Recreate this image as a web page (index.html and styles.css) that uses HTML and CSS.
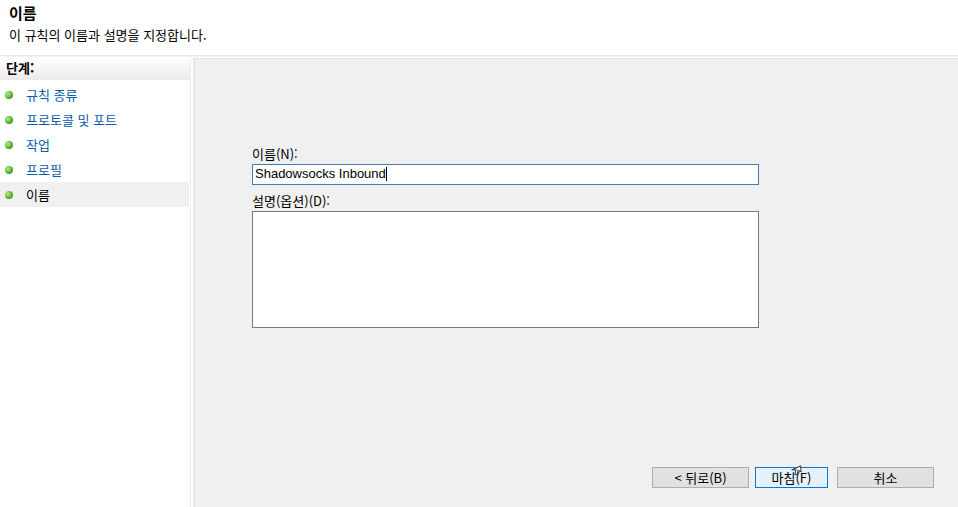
FILE: index.html
```html
<!DOCTYPE html>
<html lang="ko">
<head>
<meta charset="utf-8">
<link rel="stylesheet" href="styles.css">
</head>
<body>
<div class="page">
  <header class="head">
    <div class="title">이름</div>
    <div class="subtitle">이 규칙의 이름과 설명을 지정합니다.</div>
  </header>
  <div class="body">
    <aside class="steps">
      <div class="steps-head">단계:</div>
      <ul class="step-list">
        <li class="step"><span class="dot"></span><span class="link">규칙 종류</span></li>
        <li class="step"><span class="dot"></span><span class="link">프로토콜 및 포트</span></li>
        <li class="step"><span class="dot"></span><span class="link">작업</span></li>
        <li class="step"><span class="dot"></span><span class="link">프로필</span></li>
        <li class="step current"><span class="dot"></span><span class="cur">이름</span></li>
      </ul>
    </aside>
    <div class="sep"></div>
    <main class="content">
      <div class="form">
        <label class="lbl">이름(N):</label>
        <div class="input">Shadowsocks Inbound<span class="caret"></span></div>
        <label class="lbl lbl2">설명(옵션)(D):</label>
        <div class="textarea"></div>
      </div>
      <div class="buttons">
        <button class="btn">&lt; 뒤로(B)</button>
        <button class="btn primary">마침(F)
          <svg class="cursor" width="14" height="16" viewBox="0 0 14 16"><path d="M8 1 L12 5 L9 6 L11 10 L9 11 L7 7 L4 9 Z" fill="#fff" stroke="#333" stroke-width="1" transform="rotate(40 7 7)"/></svg>
        </button>
        <button class="btn">취소</button>
      </div>
    </main>
  </div>
</div>
</body>
</html>
```
FILE: styles.css
```css
* { box-sizing: border-box; }
html, body { margin: 0; padding: 0; }
body {
  width: 958px;
  height: 507px;
  overflow: hidden;
  background: #ffffff;
  font-family: "Noto Sans CJK KR", "DejaVu Sans", sans-serif;
  font-size: 13px;
  color: #000;
}
.page { display: flex; flex-direction: column; height: 507px; }
.head {
  height: 56px;
  padding: 3px 0 0 9px;
  border-bottom: 1px solid #e6e6e6;
  flex: none;
}
.title { font-size: 15px; font-weight: bold; line-height: 20px; }
.subtitle { font-size: 13px; line-height: 18px; margin-top: 3px; }
.body {
  flex: 1;
  display: flex;
  padding-top: 1px;
  border-top: 1px solid #f4f4f4;
}
.steps {
  width: 191px;
  flex: none;
  background: #fff;
  border-right: 1px solid #ececec;
}
.steps-head {
  height: 22px;
  padding: 1px 0 0 6px;
  font-weight: bold;
  font-size: 13px;
  line-height: 18px;
  background: linear-gradient(#ffffff, #ebebeb);
}
.step-list { list-style: none; margin: 2px 0 0; padding: 0; }
.step {
  height: 25px;
  display: flex;
  align-items: center;
  padding-left: 5px;
  margin-right: 1px;
}
.step.current { background: #f0f0f0; }
.dot {
  width: 8px;
  height: 8px;
  border-radius: 50%;
  background: radial-gradient(circle at 35% 35%, #b6ec8e, #4faa24 60%, #2f7d12);
  margin-right: 13px;
}
.link { color: #0b5cad; }
.cur { color: #000; }
.sep {
  width: 3px;
  flex: none;
  background: #fff;
  border-right: 1px solid #e8e8e8;
}
.content {
  flex: 1;
  background: #f0f0f0;
  border-top: 1px solid #e4e4e4;
  border-left: 1px solid #e4e4e4;
  display: flex;
  flex-direction: column;
  padding: 87px 0 0 57px;
}
.form { width: 507px; display: flex; flex-direction: column; }
.lbl { line-height: 16px; height: 16px; }
.lbl2 { margin-top: 8px; }
.input {
  margin-top: 2px;
  height: 21px;
  border: 1px solid #3c7fb1;
  background: #fff;
  padding: 0 0 2px 2px;
  font-family: "Liberation Sans", sans-serif;
  font-size: 13px;
  display: flex;
  align-items: center;
}
.caret { width: 1px; height: 14px; background: #000; }
.textarea {
  margin-top: 2px;
  height: 117px;
  border: 1px solid #7a7a7a;
  background: #fff;
}
.buttons {
  margin-top: auto;
  margin-bottom: 19px;
  margin-left: 400px;
  display: flex;
}
.btn {
  font-family: "Noto Sans CJK KR", sans-serif;
  font-size: 13px;
  height: 21px;
  width: 97px;
  padding: 0;
  background: #e1e1e1;
  border: 1px solid #adadad;
  color: #000;
  line-height: 18px;
  margin-right: 9px;
}
.btn.primary {
  width: 73px;
  background: #e5f1fb;
  border-color: #0078d7;
  position: relative;
}
.btn + .btn.primary { margin-left: -3px; }
.cursor { position: absolute; left: 33px; top: -5px; }
```
